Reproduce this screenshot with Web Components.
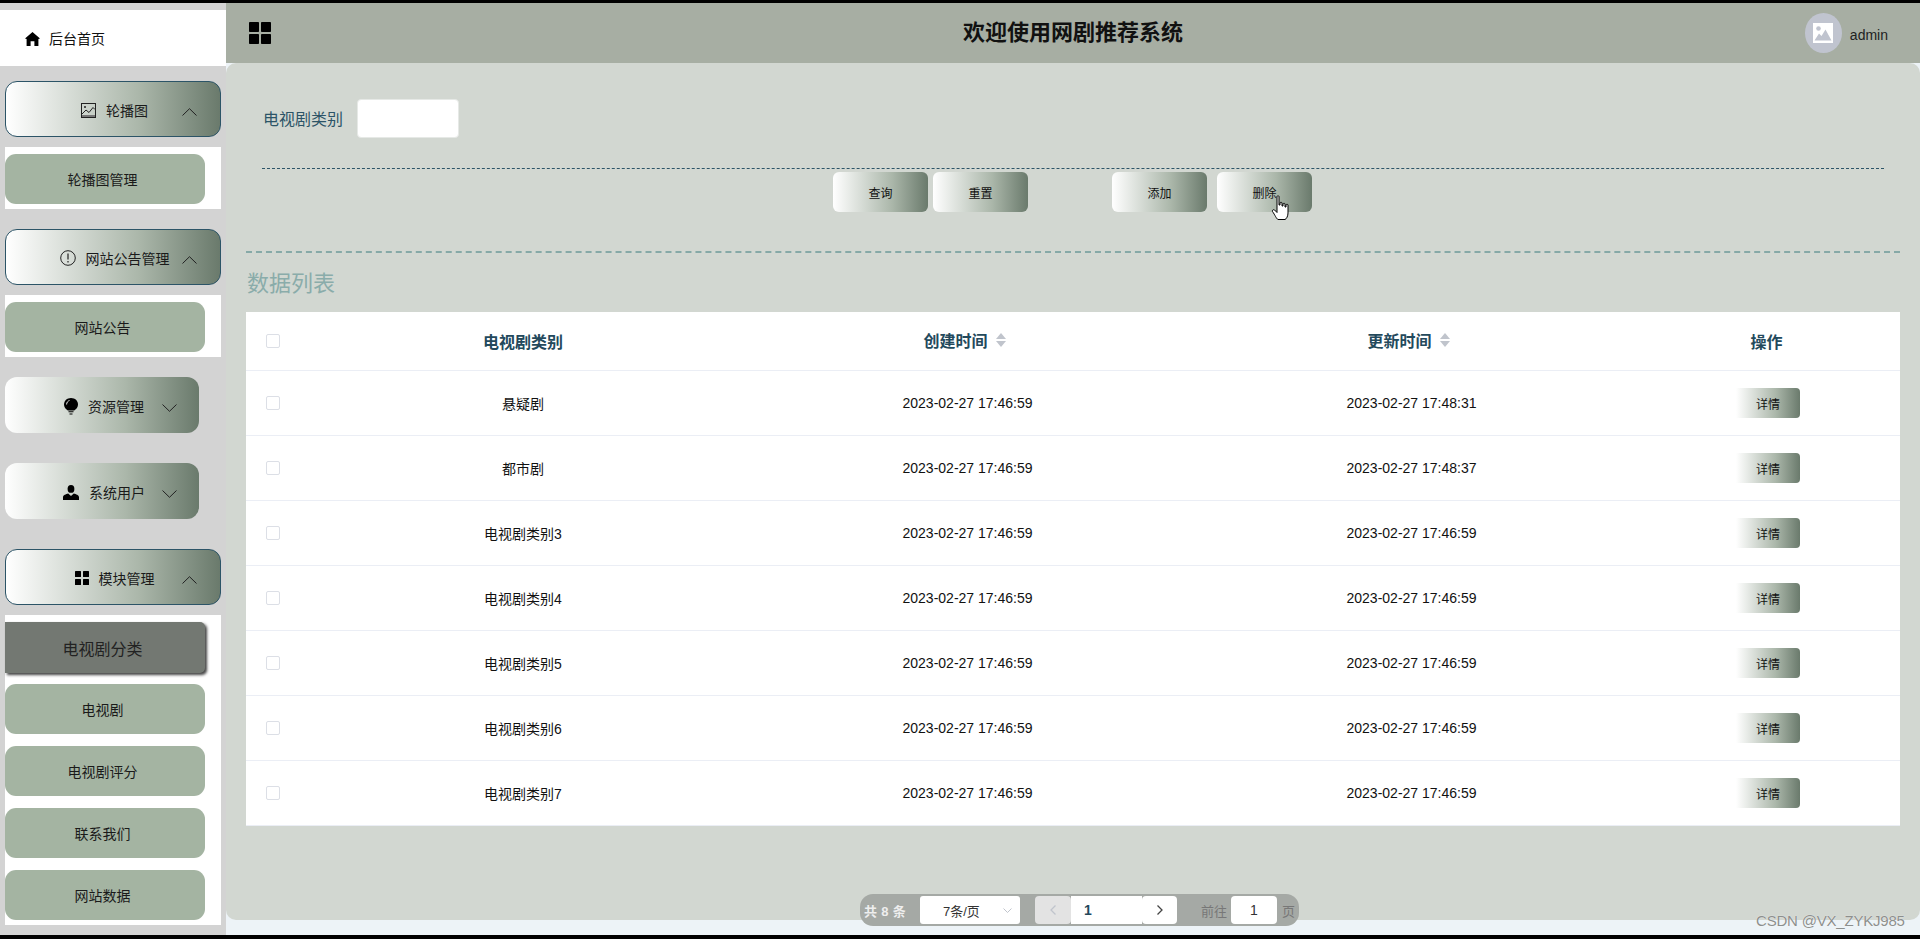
<!DOCTYPE html>
<html lang="zh"><head><meta charset="utf-8"><title>网剧推荐系统</title>
<style>
html,body{margin:0;padding:0;height:939px;overflow:hidden;background:#000}
body{font-family:"Liberation Sans","Noto Sans CJK SC",sans-serif}
</style></head><body>
<app-shell></app-shell>
<script>
const FONT='"Liberation Sans","Noto Sans CJK SC",sans-serif';
const GRAD='linear-gradient(90deg,#fff 0%,#abb7aa 62%,#6a7a6c 100%)';
const ICONS={
 home:'<svg width="15" height="14" viewBox="0 0 15 14"><path d="M7.5 0 15 6.6 13.4 7V14H9.4V9.2H5.600V14H1.600V7L0 6.600Z" fill="#000"/></svg>',
 picture:'<svg width="15" height="15" viewBox="0 0 15 15" fill="none" stroke="#222" stroke-width="1"><rect x=".5" y=".5" width="14" height="14"/><circle cx="4" cy="4" r="1" fill="#222" stroke="none"/><path d="M1 11 5 7 8 9.500 12 4.500 14 6.500"/><path d="M1 13H14" stroke-width="2" stroke="#777"/></svg>',
 warn:'<svg width="16" height="16" viewBox="0 0 16 16" fill="none" stroke="#222"><circle cx="8" cy="8" r="7.300"/><path d="M8 3.600V9.400M8 11V12.400" stroke-width="1.200"/></svg>',
 bulb:'<svg width="14" height="17" viewBox="0 0 14 17"><path d="M7 0C3 0 0 2.800 0 6.500 0 9.200 1.500 11 3.800 12.400H10.200C12.500 11 14 9.200 14 6.500 14 2.800 11 0 7 0Z" fill="#000"/><path d="M4.500 13.800H9.500M5.500 16H8.500" stroke="#000" stroke-width="1.100"/><path d="M2.600 6.500C2.600 4.400 3.900 3 5.500 2.500" fill="none" stroke="#fff" stroke-width=".9"/></svg>',
 user:'<svg width="16" height="15" viewBox="0 0 16 15"><ellipse cx="8" cy="3.900" rx="3.400" ry="3.900" fill="#000"/><path d="M0 15V12C0 10.400 3 9 5.200 8.500L8 11 10.800 8.500C13 9 16 10.400 16 12V15Z" fill="#000"/></svg>',
 grid:'<svg width="14" height="14" viewBox="0 0 14 14" fill="#000"><rect width="6" height="6" rx=".5"/><rect x="8" width="6" height="6" rx=".5"/><rect y="8" width="6" height="6" rx=".5"/><rect x="8" y="8" width="6" height="6" rx=".5"/></svg>',
 up:'<svg width="15" height="8" viewBox="0 0 15 8" fill="none" stroke="#222" stroke-width="1"><path d="M.5 7.500 7.500 .7 14.500 7.500"/></svg>',
 down:'<svg width="15" height="8" viewBox="0 0 15 8" fill="none" stroke="#222" stroke-width="1"><path d="M.5 .5 7.500 7.300 14.500 .5"/></svg>'
};
function def(name,css,html,init){
  const t=document.createElement('template');
  t.innerHTML='<style>'+css+'</style>'+html;
  customElements.define(name,class extends HTMLElement{
    constructor(){super();this.attachShadow({mode:'open'}).appendChild(t.content.cloneNode(true));}
    connectedCallback(){if(init)init(this,this.shadowRoot);}
  });
}

def('nav-home',`:host{display:flex;align-items:center;height:56px;background:#fff;padding-left:25px;gap:9px;font-size:14px;color:#111;margin-top:7px}
 svg{display:block;margin-top:2px}`,ICONS.home+'<span>后台首页</span>');

def('nav-group',`:host{display:block}
 :host([open]){margin-bottom:20px}
 .t{display:grid;grid-template-columns:1fr auto 1fr;align-items:center;box-sizing:border-box;height:56px;margin-left:5px;width:194px;padding:2px 22px 0 26px;background:${GRAD};border-radius:12px;font-size:14px;color:#1a1a1a;margin-bottom:30px}
 :host([open]) .t{width:216px;border:1px solid #2c5467;margin-bottom:10px;padding:2px 23px 0 26px}
 .m{grid-column:2;display:flex;align-items:center;gap:10px;white-space:nowrap}
 .c{grid-column:3;justify-self:end;display:flex;margin-top:3px}
 .i{display:flex}
 .p{display:none;margin-left:5px;width:216px;background:#fff;padding:7px 0 5px;box-sizing:border-box}
 :host([open]) .p{display:block}
 `,`<div class="t"><div class="m"><span class="i"></span><span class="l"></span></div><span class="c"></span></div><div class="p"><slot></slot></div>`,
 (h,s)=>{s.querySelector('.i').innerHTML=ICONS[h.getAttribute('icon')];s.querySelector('.l').textContent=h.getAttribute('label');
  s.querySelector('.c').innerHTML=h.hasAttribute('open')?ICONS.up:ICONS.down;});

def('nav-item',`:host{display:flex;align-items:center;justify-content:center;box-sizing:border-box;width:200px;height:50px;padding-right:5px;background:#a4b4a2;border-radius:11px;font-size:14px;color:#1a1a1a;margin-bottom:12px}
 :host(:last-child){margin-bottom:0}
 :host([active]){height:51px;font-size:16px;background:#737872;color:#222;border-radius:0 5px 5px 0;box-shadow:2px 2px 3px rgba(0,0,0,.75);margin-bottom:11px}`,'<slot></slot>');

def('side-bar',`:host{display:block;width:226px;flex:none;background:#d3d3d3;overflow:hidden}
 nav-home{margin-bottom:15px}`,`<nav-home></nav-home>
 <nav-group open icon="picture" label="轮播图"><nav-item>轮播图管理</nav-item></nav-group>
 <nav-group open icon="warn" label="网站公告管理"><nav-item>网站公告</nav-item></nav-group>
 <nav-group icon="bulb" label="资源管理"></nav-group>
 <nav-group icon="user" label="系统用户"></nav-group>
 <nav-group open icon="grid" label="模块管理"><nav-item active>电视剧分类</nav-item><nav-item>电视剧</nav-item><nav-item>电视剧评分</nav-item><nav-item>联系我们</nav-item><nav-item>网站数据</nav-item></nav-group>`);

def('top-bar',`:host{display:grid;grid-template-columns:1fr auto 1fr;align-items:center;height:60px;background:#a7aea3;flex:none}
 .g{padding-left:23px;display:flex}
 h1{margin:0;font-size:22px;font-weight:700;color:#111;line-height:1}
 .u{justify-self:end;display:flex;align-items:center;gap:8px;padding-right:32px;font-size:14px;color:#222}
 .u span:last-child{margin-top:3px}
 .a{width:37px;height:40px;border-radius:50%;background:#c0c4cf;display:flex;align-items:center;justify-content:center}
 `,`<div class="g"><svg width="22" height="22" viewBox="0 0 22 22" fill="#000"><rect width="10" height="10" rx=".8"/><rect x="12" width="10" height="10" rx=".8"/><rect y="12" width="10" height="10" rx=".8"/><rect x="12" y="12" width="10" height="10" rx=".8"/></svg></div>
 <h1>欢迎使用网剧推荐系统</h1>
 <div class="u"><span class="a"><svg width="20" height="20" viewBox="0 0 20 20"><rect width="20" height="20" fill="#fff"/><circle cx="5.500" cy="5.500" r="2.300" fill="#c0c4cf"/><path d="M1.500 17.500 6 10.500 8.500 13 12.500 6.500 18.500 17.500Z" fill="#c0c4cf"/></svg></span><span>admin</span></div>`);

def('grad-btn',`:host{display:inline-flex;align-items:center;justify-content:center;width:95px;height:40px;background:${GRAD};border-radius:6px;font-size:12px;color:#111;flex:none}
 :host([small]){width:64px;height:30px;border-radius:0 4px 4px 0}`,'<slot></slot>');

def('search-form',`:host{display:block;padding-top:36px}
 .r{display:flex;align-items:center;padding-left:37px;gap:14px;font-size:16px;color:#2c5467}
 .r span{margin-top:-2px}
 .in{width:102px;height:39px;background:#fff;border-radius:4px;box-sizing:border-box;border:1px solid #e6e9e6}
 .d{margin:30px 36px 0;border-top:1px dashed #2c5467}
 .b{display:flex;justify-content:center;margin-top:3px;padding-right:1px}
 .b grad-btn+grad-btn{margin-left:5px}
 .b grad-btn.x{margin-left:84px}
 .b grad-btn.y{margin-left:10px}
 `,`<div class="r"><span>电视剧类别</span><div class="in"></div></div><div class="d"></div>
 <div class="b"><grad-btn>查询</grad-btn><grad-btn>重置</grad-btn><grad-btn class="x">添加</grad-btn><grad-btn class="y">删除</grad-btn></div>`);

const COLS='55px 444px 444px 444px 267px';
def('sort-caret',`:host{display:inline-flex;flex-direction:column;gap:2px;margin-left:8px}
 i{display:block;width:0;height:0;border-left:5px solid transparent;border-right:5px solid transparent;border-bottom:6px solid #c0c4cc}
 i+i{border-bottom:0;border-top:6px solid #c0c4cc}`,'<i></i><i></i>');
def('check-box',`:host{display:block;width:14px;height:14px;box-sizing:border-box;border:1px solid #dcdfe6;border-radius:2px;background:#fff}`,'');

def('table-head',`:host{display:grid;grid-template-columns:${COLS};align-items:center;height:59px;box-sizing:border-box;border-bottom:1px solid #ebeef5;font-size:16px;font-weight:700;color:#23495c;text-align:center}
 check-box{margin-left:20px}
 .s{display:flex;justify-content:center;align-items:center;margin-top:-3px;padding-right:5px}`,`<check-box></check-box><span>电视剧类别</span><span class="s">创建时间<sort-caret></sort-caret></span><span class="s">更新时间<sort-caret></sort-caret></span><span>操作</span>`);

def('table-row',`:host{display:grid;grid-template-columns:${COLS};align-items:center;height:65px;box-sizing:border-box;border-bottom:1px solid #ebeef5;font-size:14px;color:#111;text-align:center}
 check-box{margin-left:20px}
 .b,.c{padding-left:1px}
 grad-btn{justify-self:start;margin-left:103px}`,`<check-box></check-box><span class="a"></span><span class="b"></span><span class="c"></span><grad-btn small>详情</grad-btn>`,
 (h,s)=>{s.querySelector('.a').textContent=h.getAttribute('name');s.querySelector('.b').textContent=h.getAttribute('created');s.querySelector('.c').textContent=h.getAttribute('updated');});

def('data-table',`:host{display:block;margin:0 20px;background:#fff}`,`<table-head></table-head>
 <table-row name="悬疑剧" created="2023-02-27 17:46:59" updated="2023-02-27 17:48:31"></table-row>
 <table-row name="都市剧" created="2023-02-27 17:46:59" updated="2023-02-27 17:48:37"></table-row>
 <table-row name="电视剧类别3" created="2023-02-27 17:46:59" updated="2023-02-27 17:46:59"></table-row>
 <table-row name="电视剧类别4" created="2023-02-27 17:46:59" updated="2023-02-27 17:46:59"></table-row>
 <table-row name="电视剧类别5" created="2023-02-27 17:46:59" updated="2023-02-27 17:46:59"></table-row>
 <table-row name="电视剧类别6" created="2023-02-27 17:46:59" updated="2023-02-27 17:46:59"></table-row>
 <table-row name="电视剧类别7" created="2023-02-27 17:46:59" updated="2023-02-27 17:46:59"></table-row>`);

def('page-bar',`:host{display:flex;align-items:center;width:439px;height:32px;box-sizing:border-box;margin:68px 0 0 634px;background:#a5a9a5;border-radius:13px;padding-left:4px;font-size:13px;color:#777}
 .t{width:56px;color:#eee;font-weight:700;white-space:nowrap;letter-spacing:.3px}
 .sel{width:100px;height:28px;background:#fff;border-radius:3px;display:flex;align-items:center;color:#333;box-sizing:border-box;padding-left:23px}
 .sel svg{margin-left:auto;margin-right:8px}
 .b{height:28px;display:flex;align-items:center;justify-content:center;background:#fff;border-radius:4px}
 .prev{width:36px;margin-left:15px;background:#e3e3e3}
 .num{width:71px;border-radius:0;justify-content:flex-start;padding-left:13px;box-sizing:border-box;font-size:14px;font-weight:700;color:#23495c}
 .next{width:35px}
 .go{margin-left:24px;width:27px;white-space:nowrap}
 .in{width:46px;margin-left:3px;color:#333;font-size:14px}
 .pg{margin-left:5px}`,`<span class="t">共 8 条</span><div class="sel"><span>7条/页</span><svg width="9" height="5" viewBox="0 0 9 5" fill="none" stroke="#c0c4cc"><path d="M.5 .5 4.500 4.500 8.500 .5"/></svg></div>
 <div class="b prev"><svg width="6" height="10" viewBox="0 0 6 10" fill="none" stroke="#c0c4cc" stroke-width="1.300"><path d="M5.500 .5 1 5 5.500 9.500"/></svg></div><div class="b num">1</div><div class="b next"><svg width="6" height="10" viewBox="0 0 6 10" fill="none" stroke="#444" stroke-width="1.300"><path d="M.5 .5 5 5 .5 9.500"/></svg></div>
 <span class="go">前往</span><div class="b in">1</div><span class="pg">页</span>`);

def('main-panel',`:host{display:block;flex:none;height:857px;background:#d2d7d1;border-radius:10px}
 .d{margin:39px 20px 0;border-top:2px dashed #86a9a7}
 h2{margin:0 20px 0 21px;font-size:22px;font-weight:400;color:#8aacaa;line-height:28px;box-sizing:border-box;padding-top:17px;height:59px}
 `,`<search-form></search-form><div class="d"></div><h2>数据列表</h2><data-table></data-table><page-bar></page-bar>`);

def('hand-cursor',`:host{position:absolute;left:1271px;top:195px;width:19px;height:26px;display:block;pointer-events:none}`,
 `<svg width="19" height="26" viewBox="0 0 19 26"><path d="M6 1.500C6 .6 8 .6 8 1.500V10H9V8C9 7 11 7 11 8V11H12V9C12 8 14 8 14 9V12H15V10C15 9 17 9 17 10V18C17 21 15.500 24 14 24.500H7C5.500 24 4 20 1.500 16.500C1 15.500 2.200 14 3.600 15L6 17.500Z" fill="#fff" stroke="#000" stroke-width="1" stroke-linejoin="round"/></svg>`);

def('water-mark',`:host{position:absolute;left:1756px;top:912px;font-size:15px;line-height:18px;letter-spacing:-.2px;color:#8d8f8d;text-shadow:0 0 1px #fff;white-space:nowrap;pointer-events:none}`,'<slot></slot>');

def('app-shell',`:host{display:flex;flex-direction:column;position:relative;width:1920px;height:939px;background:#000;font-family:${FONT};box-sizing:border-box;padding:3px 0 4px}
 .w{flex:1;display:flex;min-height:0}
 .m{flex:1;display:flex;flex-direction:column;background:#edf3f7;min-width:0}`,
 `<div class="w"><side-bar></side-bar><div class="m"><top-bar></top-bar><main-panel></main-panel></div></div>
 <hand-cursor></hand-cursor><water-mark>CSDN @VX_ZYKJ985</water-mark>`);
</script>
</body></html>
